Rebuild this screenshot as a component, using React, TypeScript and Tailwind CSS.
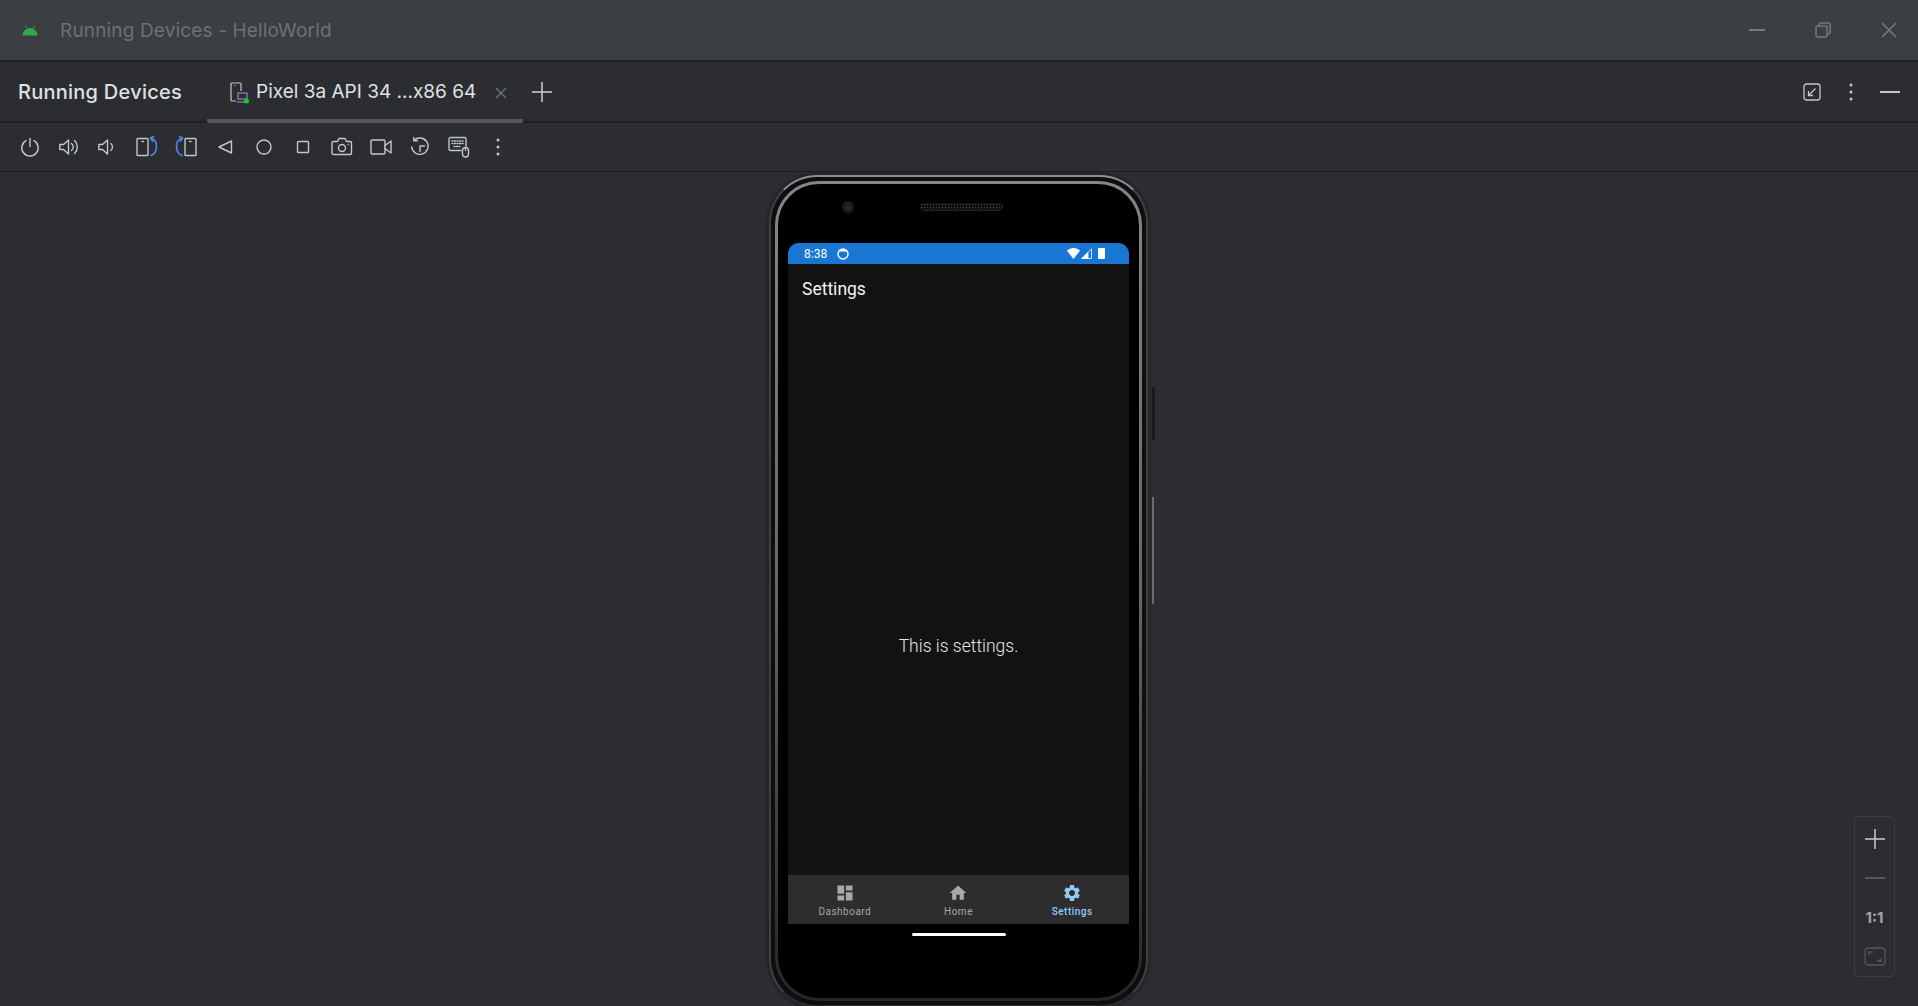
import type { ReactNode } from "react";

const stroke = "#c3c6cc";
const blue = "#4a86e8";

const Ico = ({ children, size = 20 }: { children: ReactNode; size?: number }) => (
  <svg width={size} height={size} viewBox={`0 0 ${size} ${size}`} fill="none" stroke={stroke} strokeWidth="1.4" strokeLinecap="round" strokeLinejoin="round">
    {children}
  </svg>
);

const Dots = () => (
  <svg width="6" height="20" viewBox="0 0 6 20" fill={stroke}>
    <circle cx="3" cy="3" r="1.5" />
    <circle cx="3" cy="10" r="1.5" />
    <circle cx="3" cy="17" r="1.5" />
  </svg>
);

const toolbarIcons: ReactNode[] = [
  <Ico key="power"><path d="M6 3.6a8.200 8.200 0 1 0 8 0" /><path d="M10 1.500v8" /></Ico>,
  <Ico key="volup"><path d="M0.800 7.500h3.700l5-4.500v14l-5-4.500H0.800z" /><path d="M12.500 6.500a4.500 4.500 0 0 1 0 7" /><path d="M15.500 3.500a9 9 0 0 1 0 13" /></Ico>,
  <Ico key="voldown"><path d="M0.800 7.500h3.700l5-4.500v14l-5-4.500H0.800z" /><path d="M12.800 6.500a4.500 4.500 0 0 1 0 7" /></Ico>,
  <Ico key="rotl" size={22}><rect x="1" y="2.500" width="11" height="17" rx="0.800" /><path d="M6 5.500h1.500" /><g stroke={blue} strokeWidth="1.700"><path d="M15 2c3.800 1.400 5.500 4.800 5.500 8.500s-2 7.500-5.500 9" /><path d="M17.500 0.500L14.500 2l2 3" /></g></Ico>,
  <Ico key="rotr" size={22}><rect x="10" y="2.500" width="11" height="17" rx="0.800" /><path d="M14.500 5.500H16" /><g stroke={blue} strokeWidth="1.700"><path d="M7 2C3.200 3.400 1.500 6.800 1.500 10.500s2 7.500 5.500 9" /><path d="M4.500 0.500L7.500 2l-2 3" /></g></Ico>,
  <Ico key="back" size={18}><path d="M15.500 3v12L3 9z" /></Ico>,
  <Ico key="home" size={18}><circle cx="9" cy="9" r="7" /></Ico>,
  <Ico key="square" size={18}><rect x="3.500" y="3.500" width="11" height="11" rx="0.800" /></Ico>,
  <Ico key="camera" size={22}><path d="M2.500 5.500h4l1.500-3h6l1.500 3h4a1.500 1.500 0 0 1 1 1.500v10a1.500 1.500 0 0 1-1.500 1.500h-16A1.500 1.500 0 0 1 1 17V7a1.500 1.500 0 0 1 1.500-1.500z" /><circle cx="11" cy="12" r="3.500" /><path d="M17 8.500h0.100" /></Ico>,
  <Ico key="video" size={22}><rect x="1" y="4" width="14" height="14" rx="1" /><path d="M15 9.500l6-4.500v12l-6-4.500" /></Ico>,
  <Ico key="snapshot"><path d="M4.200 3.200a8.200 8.200 0 1 1-2.500 6.800" /><path d="M3.800 0.500v3.300h3.500" /><path d="M10 14.500V9h4.500" /></Ico>,
  <Ico key="keyboard" size={22}><path d="M13 14.500H2.500A1.500 1.500 0 0 1 1 13V3a1.500 1.500 0 0 1 1.500-1.500h14A1.500 1.500 0 0 1 18 3v7" /><path d="M4 5h11M4 7.500h11M6 10.500h7" strokeDasharray="1 1.500" /><rect x="14.500" y="11.500" width="6" height="9.500" rx="3" /><path d="M17.500 11.500v3" /></Ico>,
  <Dots key="dots" />,
];

const NavItem = ({ label, active, children }: { label: string; active?: boolean; children: ReactNode }) => (
  <div className={`flex flex-col items-center pt-[8px] ${active ? "font-medium text-[#90caf9]" : "text-[#a8a8a8]"}`}>
    <svg width="20" height="20" viewBox="0 0 24 24" fill="currentColor">{children}</svg>
    <span className="mt-[2px] text-[10px] leading-[14px] tracking-[0.5px]">{label}</span>
  </div>
);

export default function App() {
  return (
    <div className="flex h-screen w-screen flex-col overflow-hidden bg-[#2b2d30] font-['Inter',sans-serif]">
      {/* window title */}
      <div className="flex h-[60px] shrink-0 items-center bg-[#3c3f41] pl-[22px] pr-[21px]">
        <svg width="16" height="11" viewBox="0 0 16 11" fill="#2fa84f">
          <path d="M0.500 10.500a7.500 7.500 0 0 1 15 0z" />
          <path d="M3 0.500l2 3M13 0.500l-2 3" stroke="#2fa84f" strokeWidth="1" />
        </svg>
        <span className="ml-[22px] pt-[2px] text-[19px] tracking-[0.15px] text-[#6e7173]">Running Devices - HelloWorld</span>
        <div className="ml-auto flex items-center gap-[50px]">
          <div className="h-[2px] w-[16px] bg-[#77797b]" />
          <svg width="16" height="16" viewBox="0 0 16 16" fill="none" stroke="#77797b" strokeWidth="1.5">
            <rect x="1" y="4" width="11" height="11" rx="1.5" />
            <path d="M4 3.500V2.500A1.500 1.500 0 0 1 5.500 1h8A1.500 1.500 0 0 1 15 2.500v8a1.500 1.500 0 0 1-1.500 1.500h-1" />
          </svg>
          <svg width="16" height="16" viewBox="0 0 16 16" stroke="#77797b" strokeWidth="1.5">
            <path d="M1 1l14 14M15 1L1 15" />
          </svg>
        </div>
      </div>

      {/* tool window tabs */}
      <div className="flex h-[63px] shrink-0 items-stretch border-y-2 border-[#1e1f22] pl-[18px] pr-[18px]">
        <div className="flex w-[164px] items-center whitespace-nowrap text-[20px] font-medium tracking-[0.25px] text-[#dfe1e5]">Running Devices</div>
        <div className="-mb-[2px] ml-[25px] flex w-[316px] items-center rounded-b-[2px] border-b-[4px] border-[#55575c] pl-[23px] pt-[4px]">
          <svg width="20" height="22" viewBox="0 0 20 22" fill="none" strokeWidth="1.2">
            <path d="M6 19H2a1 1 0 0 1-1-1V2a1 1 0 0 1 1-1h8a1 1 0 0 1 1 1v7" stroke="#c3c6cc" />
            <path d="M4.500 3.500h1" stroke="#c3c6cc" />
            <rect x="8" y="11" width="9" height="6" stroke="#9b7fd1" />
            <path d="M7 20h11" stroke="#9b7fd1" />
            <circle cx="16.500" cy="19" r="2.500" fill="#14d114" />
          </svg>
          <span className="ml-[6px] whitespace-nowrap text-[19px] text-[#dfe1e5]">Pixel 3a API 34 ...x86 64</span>
          <svg className="ml-[19px]" width="12" height="12" viewBox="0 0 12 12" stroke="#70737a" strokeWidth="1.3">
            <path d="M1 1l10 10M11 1L1 11" />
          </svg>
        </div>
        <div className="ml-[9px] flex items-center">
          <svg width="20" height="20" viewBox="0 0 20 20" stroke="#ced0d6" strokeWidth="1.5">
            <path d="M10 0v20M0 10h20" />
          </svg>
        </div>
        <div className="ml-auto flex items-center">
          <svg width="18" height="18" viewBox="0 0 18 18" fill="none" stroke="#c3c6cc" strokeWidth="1.3">
            <rect x="1" y="1" width="16" height="16" rx="2.5" />
            <path d="M12.500 5.500L6 12M5.500 8v4.500H10" />
          </svg>
          <div className="ml-[27px]"><Dots /></div>
          <div className="ml-[26px] h-[2px] w-[20px] bg-[#c3c6cc]" />
        </div>
      </div>

      {/* emulator toolbar */}
      <div className="flex h-[49px] shrink-0 items-center border-b border-[#1e1f22] pl-[10px]">
        {toolbarIcons.map((icon, i) => (
          <div key={i} className="flex h-full w-[39px] items-center justify-center">
            {icon}
          </div>
        ))}
      </div>

      {/* device canvas */}
      <div className="relative flex min-h-0 flex-1 justify-center overflow-hidden pr-[1px] pt-[3px]">
        {/* device frame */}
        <div className="relative h-[832px] w-[379px] shrink-0 rounded-[48px] border-2 border-[#3f4042] border-t-[#8d8e90] border-b-[#2a2b2d] bg-[#0e0e0f] p-[4px] shadow-[0_0_0_3px_#25262a]">
          <div className="absolute left-full top-[210px] ml-[6px] h-[53px] w-[3px] bg-[#1a1b1d]" />
          <div className="absolute left-full top-[320px] ml-[6px] h-[107px] w-[2px] bg-[#6a6b6d]" />
          <div className="h-full w-full rounded-[44px] bg-gradient-to-b from-[#858689] via-[#66676a] to-[#262627] p-[3px]">
            <div className="flex h-full w-full flex-col items-center rounded-[41px] bg-black">
              <div className="flex h-[59px] w-full shrink-0 items-start pt-[17px]">
                <div className="ml-[64px] flex h-[12px] w-[12px] items-center justify-center rounded-full bg-[#1c1c20]">
                  <div className="h-[5px] w-[5px] rounded-full bg-[#1e2a55]" />
                </div>
                <div className="ml-[66px] mt-[2px] h-[8px] w-[83px] rounded-full bg-[#111] bg-[radial-gradient(#4a4a4a_1px,transparent_1px)] bg-[length:3px_3px]" />
              </div>

              {/* screen */}
              <div className="flex h-[681px] w-[341px] shrink-0 flex-col overflow-hidden rounded-t-[11px] bg-[#121212] font-['Roboto',sans-serif]">
                <div className="flex h-[21px] shrink-0 items-center bg-[#1976d2] pl-[16px] pr-[24px] text-[12px] text-white">
                  <span>8:38</span>
                  <svg className="ml-[10px]" width="12" height="12" viewBox="0 0 12 12" fill="none" stroke="#fff" strokeWidth="1.4">
                    <circle cx="6" cy="6" r="5" />
                    <path d="M2 3.500a5 5 0 0 1 8 0z" fill="#fff" stroke="none" />
                  </svg>
                  <div className="ml-auto flex items-center">
                    <svg width="13" height="11" viewBox="0 0 13 11" fill="#fff"><path d="M0 2.800C3.500-0.900 9.500-0.900 13 2.800L6.500 11z" /></svg>
                    <svg className="ml-[1px]" width="11" height="11" viewBox="0 0 11 11" fill="none" stroke="#fff" strokeWidth="0.8"><path d="M10.500 0.800v9.700H0.800z" /><path d="M7 4.500v6H0.800z" fill="#fff" /></svg>
                    <div className="ml-[6px] h-[11px] w-[7px] rounded-[1px] bg-white" />
                  </div>
                </div>
                <div className="flex h-[50px] shrink-0 items-center pl-[14px] text-[17.5px] text-[#f2f2f2]">Settings</div>
                <div className="flex flex-1 items-center justify-center pt-[104px] text-[17.5px] font-light text-[#e6e6e6]">This is settings.</div>
                <div className="grid h-[49px] shrink-0 grid-cols-3 bg-[#2d2d2d]">
                  <NavItem label="Dashboard"><path d="M3 13h8V3H3v10zm0 8h8v-6H3v6zm10 0h8V11h-8v10zm0-18v6h8V3h-8z" /></NavItem>
                  <NavItem label="Home"><path d="M10 20v-6h4v6h5v-8h3L12 3 2 12h3v8z" /></NavItem>
                  <NavItem label="Settings" active><path d="M19.140 12.940c.04-.3.060-.61.060-.94 0-.32-.020-.64-.070-.94l2.030-1.580a.49.49 0 0 0 .12-.61l-1.920-3.320a.488.488 0 0 0-.59-.22l-2.390.96c-.5-.38-1.030-.7-1.620-.94l-.36-2.540a.484.484 0 0 0-.48-.41h-3.840c-.24 0-.43.17-.47.41l-.36 2.540c-.59.24-1.130.57-1.620.94l-2.390-.96c-.22-.08-.47 0-.59.22L2.740 8.870c-.12.210-.08.47.12.61l2.030 1.580c-.05.3-.09.63-.09.94s.02.640.07.94l-2.030 1.580a.49.49 0 0 0-.12.61l1.920 3.320c.12.22.37.29.59.22l2.390-.96c.5.38 1.030.7 1.620.94l.36 2.540c.05.24.24.41.48.41h3.840c.24 0 .44-.17.47-.41l.36-2.540c.59-.24 1.130-.56 1.620-.94l2.390.96c.22.08.47 0 .59-.22l1.920-3.320c.12-.22.07-.47-.12-.61l-2.010-1.580zM12 15.600c-1.980 0-3.600-1.620-3.600-3.600s1.620-3.600 3.600-3.600 3.600 1.620 3.600 3.600-1.620 3.600-3.600 3.600z" /></NavItem>
                </div>
              </div>
              <div className="mt-[9px] h-[3px] w-[94px] rounded-full bg-white" />
            </div>
          </div>
        </div>

        {/* zoom controls */}
        <div className="absolute bottom-[29px] right-[23px] flex h-[161px] w-[41px] flex-col items-center rounded-[5px] border border-[#3d3f43] bg-[#2b2d30]">
          <svg className="mt-[12px]" width="20" height="20" viewBox="0 0 20 20" stroke="#c8cace" strokeWidth="1.5"><path d="M10 0v20M0 10h20" /></svg>
          <div className="mt-[28px] h-[2px] w-[20px] bg-[#55575b]" />
          <span className="mt-[31px] text-[15px] font-bold leading-[16px] text-[#a3a5a9]">1:1</span>
          <svg className="mt-[21px]" width="22" height="19" viewBox="0 0 22 19" fill="none" stroke="#55575b" strokeWidth="1.3">
            <rect x="1" y="1" width="20" height="17" rx="3" />
            <path d="M5 8V5h4M17 11v3h-4" />
          </svg>
        </div>
      </div>
    </div>
  );
}
